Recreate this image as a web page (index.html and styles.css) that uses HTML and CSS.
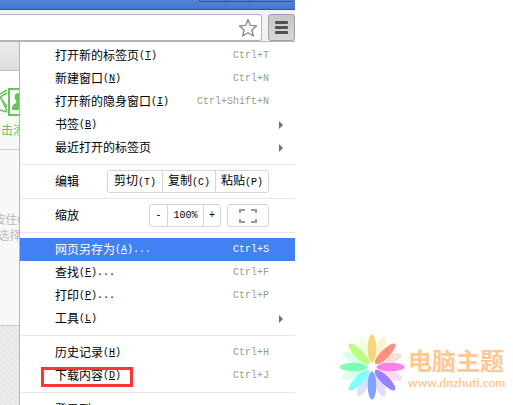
FILE: index.html
```
<!DOCTYPE html>
<html lang="zh-CN">

<head>
    <meta charset="utf-8">
    <title>Chrome 菜单</title>
    <link rel="stylesheet" href="styles.css">
</head>

<body>
    <div class="browser">
        <div class="titlebar">
            <div class="window-buttons"><i></i><i></i><i></i></div>
        </div>
        <div class="toolbar">
            <div class="omnibox">
                <input class="address" type="text" aria-label="地址">
                <button class="star" aria-label="书签">
                    <svg width="20" height="20" viewBox="0 0 20 20"><path d="M10 1.5 12.3 7.4 18.5 7.9 13.8 12 15.4 18 10 14.8 4.6 18 6.2 12 1.5 7.9 7.7 7.4Z" fill="#fff" stroke="#858585" stroke-width="1.3" stroke-linejoin="round"/></svg>
                </button>
            </div>
            <button class="menu-button" aria-label="菜单"><i></i><i></i><i></i></button>
        </div>

        <div class="content">
            <div class="page">
                <div class="page-tabs"></div>
                <div class="page-add">
                    <svg width="19" height="32" viewBox="0 0 19 32" fill="none" stroke="#67c25c" stroke-width="1.5">
                        <path d="M7 5 0 9M7 8 0 12 7 22M0 25 7 27M1 13 7 26"/>
                        <path d="M24 4H9V30H24" stroke-width="2"/>
                        <path d="M19 8c-4 0-5 3-4 6 1 2 2 3 1 4-3 1-4 3-4 7h7z" fill="#67c25c" stroke="none"/>
                    </svg>
                    <span>击添</span>
                </div>
                <div class="page-hint">
                    <span>按住C</span>
                    <span>选择</span>
                </div>
                <div class="page-footer"></div>
            </div>

            <div class="menu">
                <button class="item">打开新的标签页<span class="key">(<u>T</u>)</span><span class="shortcut">Ctrl+T</span></button>
                <button class="item">新建窗口<span class="key">(<u>N</u>)</span><span class="shortcut">Ctrl+N</span></button>
                <button class="item">打开新的隐身窗口<span class="key">(<u>I</u>)</span><span class="shortcut">Ctrl+Shift+N</span></button>
                <button class="item submenu">书签<span class="key">(<u>B</u>)</span></button>
                <button class="item submenu">最近打开的标签页</button>
                <hr>
                <div class="row">
                    <span>编辑</span>
                    <div class="group edit">
                        <button>剪切<span class="key">(T)</span></button>
                        <button>复制<span class="key">(C)</span></button>
                        <button>粘贴<span class="key">(P)</span></button>
                    </div>
                </div>
                <hr>
                <div class="row">
                    <span>缩放</span>
                    <div class="group zoom">
                        <button class="key">-</button>
                        <button class="key level">100%</button>
                        <button class="key">+</button>
                    </div>
                    <button class="fullscreen" aria-label="全屏">
                        <svg width="18" height="14" viewBox="0 0 18 14"><path d="M1 4V1H6M12 1H17V4M17 10V13H12M6 13H1V10" fill="none" stroke="#999" stroke-width="2"/></svg>
                    </button>
                </div>
                <hr>
                <button class="item selected">网页另存为<span class="key">(<u>A</u>)...</span><span class="shortcut">Ctrl+S</span></button>
                <button class="item">查找<span class="key">(<u>F</u>)...</span><span class="shortcut">Ctrl+F</span></button>
                <button class="item">打印<span class="key">(<u>P</u>)...</span><span class="shortcut">Ctrl+P</span></button>
                <button class="item submenu">工具<span class="key">(<u>L</u>)</span></button>
                <hr>
                <button class="item">历史记录<span class="key">(<u>H</u>)</span><span class="shortcut">Ctrl+H</span></button>
                <button class="item marked">下载内容<span class="key">(<u>D</u>)</span><span class="shortcut">Ctrl+J</span></button>
                <hr>
                <button class="item">登录到</button>
            </div>
        </div>
    </div>

    <div class="brand">
        <svg width="66" height="66" viewBox="-33 -33 66 66">
            <g opacity="0.3">
                <ellipse cy="-20" rx="4.5" ry="12" fill="#ffd066" transform="rotate(22)"/>
                <ellipse cy="-20" rx="4.5" ry="12" fill="#ff9a80" transform="rotate(67)"/>
                <ellipse cy="-20" rx="4.5" ry="12" fill="#ff80d8" transform="rotate(112)"/>
                <ellipse cy="-20" rx="4.5" ry="12" fill="#a090ff" transform="rotate(157)"/>
                <ellipse cy="-20" rx="4.5" ry="12" fill="#80a0ff" transform="rotate(205)"/>
                <ellipse cy="-20" rx="4.5" ry="12" fill="#80ffd0" transform="rotate(250)"/>
                <ellipse cy="-20" rx="4.5" ry="12" fill="#80ffb0" transform="rotate(295)"/>
                <ellipse cy="-20" rx="4.5" ry="12" fill="#d0ff90" transform="rotate(340)"/>
            </g>
            <ellipse cy="-18.5" rx="4.3" ry="14" fill="#f5d67c"/>
            <ellipse cy="-18.5" rx="4.3" ry="14" fill="#ff9080" transform="rotate(45)"/>
            <ellipse cy="-18.5" rx="4.3" ry="14" fill="#ff80e8" transform="rotate(90)"/>
            <ellipse cy="-18.5" rx="4.3" ry="14" fill="#9c80ff" transform="rotate(135)"/>
            <ellipse cy="-18.5" rx="4.3" ry="14" fill="#80a4ff" transform="rotate(180)"/>
            <ellipse cy="-18.5" rx="4.3" ry="14" fill="#80ffff" transform="rotate(225)"/>
            <ellipse cy="-18.5" rx="4.3" ry="14" fill="#80ffb4" transform="rotate(270)"/>
            <ellipse cy="-18.5" rx="4.3" ry="14" fill="#b8ff80" transform="rotate(315)"/>
        </svg>
        <div class="brand-text">
            <span class="brand-name">电脑主题</span>
            <a class="brand-link" href="http://www.dnzhuti.com">www.dnzhuti.com</a>
        </div>
    </div>
</body>

</html>
```
FILE: styles.css
```
*,
*::before,
*::after {
    box-sizing: border-box;
}

body {
    display: flex;
    height: 100vh;
    margin: 0;
    overflow: hidden;
    background: #fff;
    color: #000;
    font: 12px/16px "Liberation Sans", "Noto Sans CJK SC", sans-serif;
}

button {
    padding: 0;
    border: none;
    background: none;
    color: inherit;
    font: inherit;
}

.browser {
    flex: 1;
    display: flex;
    flex-direction: column;
    min-width: 0;
}

.titlebar {
    display: flex;
    justify-content: flex-end;
    height: 10px;
    padding-right: 2px;
    background: linear-gradient(#5585d8, #4675cc);
    border-bottom: 1px solid #2f559f;
}

.window-buttons {
    display: grid;
    grid-template-columns: 26px 24px 42px;
    height: 2px;
    border: 1px solid #2d519a;
    border-top: none;
    border-radius: 0 0 3px 3px;
}

.window-buttons i + i {
    border-left: 1px solid #2d519a;
}

.toolbar {
    display: flex;
    gap: 6px;
    height: 31px;
    padding-top: 4px;
    background: #f2f2f2;
}

.omnibox {
    flex: 1;
    display: flex;
    align-items: center;
    height: 27px;
    padding-right: 3px;
    background: #fff;
    border: 1px solid #b5b5b5;
    border-left: none;
    border-radius: 0 3px 3px 0;
}

.address {
    flex: 1;
    min-width: 0;
    border: none;
    outline: none;
    background: none;
}

.star,
.star svg {
    display: block;
}

.menu-button {
    display: flex;
    flex-direction: column;
    align-items: center;
    justify-content: center;
    gap: 2px;
    width: 27px;
    height: 27px;
    background: linear-gradient(#c6c6c6, #d8d8d8);
    border: 1px solid #a0a0a0;
    border-radius: 3px;
}

.menu-button i {
    width: 13px;
    height: 3px;
    background: #505050;
    border-radius: 1px;
}

.content {
    flex: 1;
    display: flex;
    min-height: 0;
}

/* strip of the page left of the menu */
.page {
    display: flex;
    flex-direction: column;
    width: 19px;
    overflow: hidden;
    white-space: nowrap;
}

.page-tabs {
    height: 30px;
    background: linear-gradient(#ececec, #dedede);
    border-top: 1px solid #b5b5b5;
    border-bottom: 1px solid #c0c0c0;
}

.page-add {
    height: 79px;
    padding-top: 14px;
    background: linear-gradient(#fff, #f7f7f7);
    border-bottom: 1px solid #d0d0d0;
    color: #67c25c;
}

.page-add svg {
    display: block;
}

.page-add span {
    display: block;
    padding: 6px 0 0 1px;
}

.page-hint {
    display: flex;
    flex-direction: column;
    align-items: center;
    height: 175px;
    padding-top: 62px;
    background: #f8f8f8;
    color: #bbb;
}

.page-footer {
    flex: 1;
    background: repeating-linear-gradient(45deg, #e6e6e6 0 2px, #ececec 2px 4px);
    border-top: 1px solid #d0d0d0;
}

.menu {
    flex: 1;
    padding-top: 2px;
    overflow: hidden;
    background: #fff;
    border-top: 1px solid #b5b5b5;
    border-left: 1px solid #b5b5b5;
}

.item,
.row {
    display: flex;
    align-items: center;
    width: 100%;
    height: 23px;
    padding: 1px 26px 0 35px;
}

.row {
    padding-top: 0;
}

.item {
    position: relative;
}

.key,
.shortcut {
    font: 10px/16px "Liberation Mono", monospace;
}

.shortcut {
    margin-left: auto;
    color: #9b9b87;
}

.submenu {
    padding-right: 12px;
}

.submenu::after {
    content: "";
    margin-left: auto;
    border: 4px solid transparent;
    border-left-color: #707070;
    border-right: none;
}

.selected,
.selected .shortcut {
    color: #fff;
}

.selected {
    background: #4281f4;
}

/* red frame round the download entry */
.marked::before {
    content: "";
    position: absolute;
    top: 3px;
    left: 21px;
    width: 92px;
    height: 20px;
    border: 3px solid #fc3535;
}

hr {
    margin: 5px 0;
    border: none;
    border-top: 1px solid #e6e6e6;
}

.group {
    display: grid;
    height: 23px;
    margin-left: auto;
    border: 1px solid #d6d6d6;
    border-radius: 3px;
}

.edit {
    grid-template-columns: 54px 53px 53px;
}

.zoom {
    grid-template-columns: 17px 36px 17px;
}

.group button + button {
    border-left: 1px solid #d6d6d6;
}

.fullscreen {
    display: flex;
    align-items: center;
    justify-content: center;
    width: 42px;
    height: 23px;
    margin-left: 6px;
    border: 1px solid #d6d6d6;
    border-radius: 3px;
}

.brand {
    display: flex;
    align-items: center;
    align-self: flex-end;
    gap: 3px;
    width: 218px;
    padding: 0 0 5px 44px;
}

.brand svg {
    flex: none;
}

.brand-text {
    display: flex;
    flex-direction: column;
    padding-top: 2px;
    color: #ffc890;
}

.brand-name {
    font: bold 24px/30px "Noto Sans CJK SC", sans-serif;
}

.brand-link {
    color: inherit;
    font: bold 12px/16px Lato, sans-serif;
    text-decoration: none;
}
```
